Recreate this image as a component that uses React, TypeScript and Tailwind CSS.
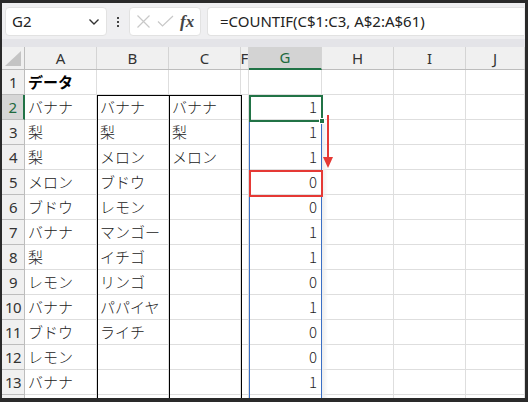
import React from "react"

const cols = [
  { key: "A", w: "w-[72px]" },
  { key: "B", w: "w-[72px]" },
  { key: "C", w: "w-[72px]" },
  { key: "F", w: "w-[8px]" },
  { key: "G", w: "w-[73px]" },
  { key: "H", w: "w-[72px]" },
  { key: "I", w: "w-[72px]" },
  { key: "J", w: "flex-1" },
]

const colA = ["データ", "バナナ", "梨", "梨", "メロン", "ブドウ", "バナナ", "梨", "レモン", "バナナ", "ブドウ", "レモン", "バナナ"]
const colB = ["", "バナナ", "梨", "メロン", "ブドウ", "レモン", "マンゴー", "イチゴ", "リンゴ", "パパイヤ", "ライチ", "", ""]
const colC = ["", "バナナ", "梨", "メロン", "", "", "", "", "", "", "", "", ""]
const colG = ["", "1", "1", "1", "0", "0", "1", "1", "0", "1", "0", "0", "1"]

const cellFont = { fontFamily: '"Noto Sans CJK JP", "Noto Sans", sans-serif' }

function cellValue(col: string, r: number) {
  if (col === "A") return colA[r] ?? ""
  if (col === "B") return colB[r] ?? ""
  if (col === "C") return colC[r] ?? ""
  if (col === "G") return colG[r] ?? ""
  return ""
}

function FormulaBar() {
  return (
    <div className="h-[36px] bg-[#efeff1] flex items-center gap-[6px] pl-[3px] pr-[1px] pt-[1px]">
      <div className="w-[102px] h-[29px] bg-white rounded-[4px] border border-[#e2e2e2] flex items-center justify-between pl-[6px] pr-[6px]">
        <span className="text-[15px] text-[#222]" style={{ fontFamily: '"Noto Sans", sans-serif' }}>G2</span>
        <svg width="12" height="8" viewBox="0 0 12 8">
          <path d="M1.5 1.5 L6 6 L10.5 1.5" fill="none" stroke="#333" strokeWidth="1.4" />
        </svg>
      </div>
      <div className="w-[10px] flex flex-col items-center gap-[2px]">
        <span className="w-[2px] h-[2px] bg-[#444]" />
        <span className="w-[2px] h-[2px] bg-[#444]" />
        <span className="w-[2px] h-[2px] bg-[#444]" />
      </div>
      <div className="w-[72px] h-[29px] bg-white rounded-[4px] border border-[#e2e2e2] flex items-center pl-[6px] gap-[6px]">
        <svg width="15" height="15" viewBox="0 0 15 15">
          <path d="M1.5 1.5 L13.5 13.5 M13.5 1.5 L1.5 13.5" stroke="#c8c8c8" strokeWidth="1.2" />
        </svg>
        <svg width="17" height="13" viewBox="0 0 17 13">
          <path d="M1 6.5 L5.5 11 L16 1" fill="none" stroke="#c8c8c8" strokeWidth="1.2" />
        </svg>
        <span className="text-[17px] italic font-bold text-[#444] leading-none" style={{ fontFamily: '"Liberation Serif", serif' }}>fx</span>
      </div>
      <div className="flex-1 h-[29px] bg-white rounded-l-[4px] border border-r-0 border-[#e2e2e2] flex items-center pl-[12px]">
        <span className="text-[15px] text-[#222]" style={{ fontFamily: '"Noto Sans", sans-serif' }}>=COUNTIF(C$1:C3, A$2:A$61)</span>
      </div>
    </div>
  )
}

function HeaderRow() {
  return (
    <div className="flex h-[23px] bg-[#f0f0f0] border-b border-[#bdbdbd]">
      <div className="w-[23px] border-r border-[#bdbdbd] relative">
        <svg className="absolute right-[3px] bottom-[3px]" width="16" height="15" viewBox="0 0 16 15">
          <path d="M16 0 L16 15 L0 15 Z" fill="#c4c4c4" />
        </svg>
      </div>
      {cols.map((c) => {
        const sel = c.key === "G"
        return (
          <div
            key={c.key}
            className={`${c.w} shrink-0 overflow-hidden flex items-center justify-center text-[15px] border-r border-[#d4d4d4] ${
              sel ? "bg-[#d3d3d3] text-[#1e6a3e] border-b-2 border-b-[#217346] -mb-[1px]" : "text-[#333]"
            }`}
            style={{ fontFamily: '"Noto Sans", sans-serif' }}
          >
            {c.key}
          </div>
        )
      })}
    </div>
  )
}

function Row({ r }: { r: number }) {
  const sel = r === 1
  const showNum = r < 13
  return (
    <div className="flex h-[25px] shrink-0">
      <div
        className={`w-[23px] shrink-0 flex items-center justify-center text-[15px] border-b border-[#bdbdbd] ${
          sel ? "bg-[#d6d6d6] text-[#1e6a3e] border-r-2 border-r-[#217346]" : "bg-[#f0f0f0] text-[#333] border-r border-r-[#bdbdbd]"
        }`}
        style={{ fontFamily: '"Noto Sans", sans-serif', letterSpacing: "-0.5px" }}
      >
        {showNum ? r + 1 : ""}
      </div>
      {cols.map((c) => {
        const v = cellValue(c.key, r)
        const num = c.key === "G"
        return (
          <div
            key={c.key}
            className={`${c.w} shrink-0 overflow-hidden flex items-center border-r border-b border-[#dedede] text-[15px] ${
              num ? "justify-end pr-[4px]" : "pl-[3px]"
            } ${r === 0 && c.key === "A" ? "font-bold text-black" : "font-light text-[#222]"}`}
            style={cellFont}
          >
            {v}
          </div>
        )
      })}
    </div>
  )
}

export default function App() {
  const rows = Array.from({ length: 14 }, (_, i) => i)
  return (
    <div className="w-[528px] h-[402px] bg-[#2a2a2a] pt-[3px] pl-[2px] pr-[3px] pb-[4px] overflow-hidden">
      <div className="w-full h-full bg-white flex flex-col overflow-hidden">
        <FormulaBar />
        <div className="h-[8px] bg-[#e4e4e8]" />
        <div className="relative flex-1 overflow-hidden flex flex-col">
          <HeaderRow />
          {rows.map((r) => (
            <Row key={r} r={r} />
          ))}

          {/* black borders around B2:C13 */}
          <div className="absolute left-[95px] top-[48px] w-[145px] h-[1px] bg-black" />
          <div className="absolute left-[95px] top-[48px] w-[1px] h-[400px] bg-black" />
          <div className="absolute left-[167px] top-[48px] w-[1px] h-[400px] bg-black" />
          <div className="absolute left-[239px] top-[48px] w-[1px] h-[400px] bg-black" />

          {/* blue range outline in G */}
          <div className="absolute left-[247px] top-[74px] w-[1px] h-[400px] bg-[#3a6fc4]" />
          <div className="absolute left-[319px] top-[76px] w-[1px] h-[400px] bg-[#3a6fc4]" />
          <div className="absolute left-[320px] top-[76px] w-[6px] h-[400px] bg-gradient-to-r from-[#ececec] to-transparent" />

          {/* selected cell G2 */}
          <div className="absolute left-[247px] top-[48px] w-[74px] h-[27px] border-2 border-[#217346]" />
          <div className="absolute left-[317px] top-[71px] w-[6px] h-[6px] bg-[#217346] border border-white" />

          {/* red highlight G5 */}
          <div className="absolute left-[247px] top-[123px] w-[74px] h-[27px] border-2 border-[#e53935]" />

          {/* red arrow */}
          <svg className="absolute left-[320px] top-[68px]" width="12" height="54" viewBox="0 0 12 54">
            <path d="M6 0 L6 43" stroke="#e53935" strokeWidth="2" />
            <path d="M1 42 L11 42 L6 53 Z" fill="#e53935" />
          </svg>
        </div>
      </div>
    </div>
  )
}
